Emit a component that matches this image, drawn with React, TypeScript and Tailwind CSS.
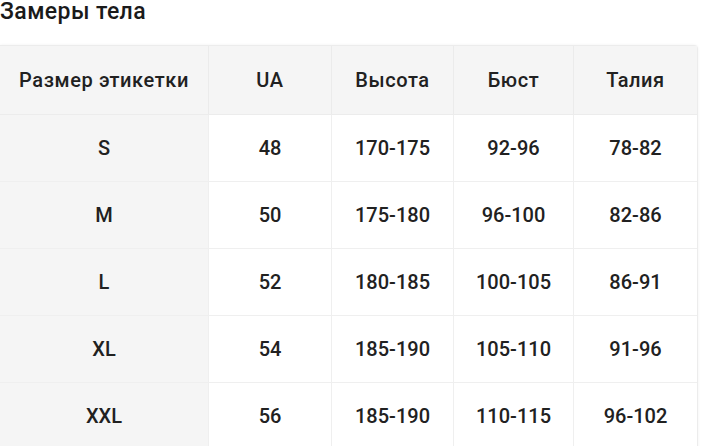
import React from "react";

const header = ["Размер этикетки", "UA", "Высота", "Бюст", "Талия"];
const rows = [
  ["S", "48", "170-175", "92-96", "78-82"],
  ["M", "50", "175-180", "96-100", "82-86"],
  ["L", "52", "180-185", "100-105", "86-91"],
  ["XL", "54", "185-190", "105-110", "91-96"],
  ["XXL", "56", "185-190", "110-115", "96-102"],
];

export default function App() {
  return (
    <div
      className="w-[701px] h-[446px] overflow-hidden bg-white text-[#212121]"
      style={{ fontFamily: "Roboto, 'Noto Sans', sans-serif" }}
    >
      <div className="h-[45px] text-[23px] leading-[24px] font-medium tracking-[0.4px] text-[#1a1a1a]">Замеры тела</div>
      <div className="w-[698px] rounded-tr-[4px] border-t border-r border-[#ececec] shadow-[0_0_3px_rgba(0,0,0,0.06)]">
        <div className="grid grid-cols-[208px_123px_122px_120px_124px] bg-[#f5f5f5] h-[69px] border-b border-[#ececec]">
          {header.map((h, i) => (
            <div
              key={i}
              className={`flex items-center justify-center text-[20px] font-medium tracking-[0.6px] ${i > 0 ? "border-l border-[#ebebeb]" : ""}`}
            >
              {h}
            </div>
          ))}
        </div>
        {rows.map((r, ri) => (
          <div
            key={ri}
            className="grid grid-cols-[208px_123px_122px_120px_124px] h-[67px] border-b border-[#efefef]"
          >
            {r.map((c, ci) => (
              <div
                key={ci}
                className={`flex items-center justify-center text-[20px] font-medium ${
                  ci === 0 ? "bg-[#f5f5f5]" : "bg-white border-l border-[#efefef]"
                }`}
              >
                {c}
              </div>
            ))}
          </div>
        ))}
      </div>
    </div>
  );
}
